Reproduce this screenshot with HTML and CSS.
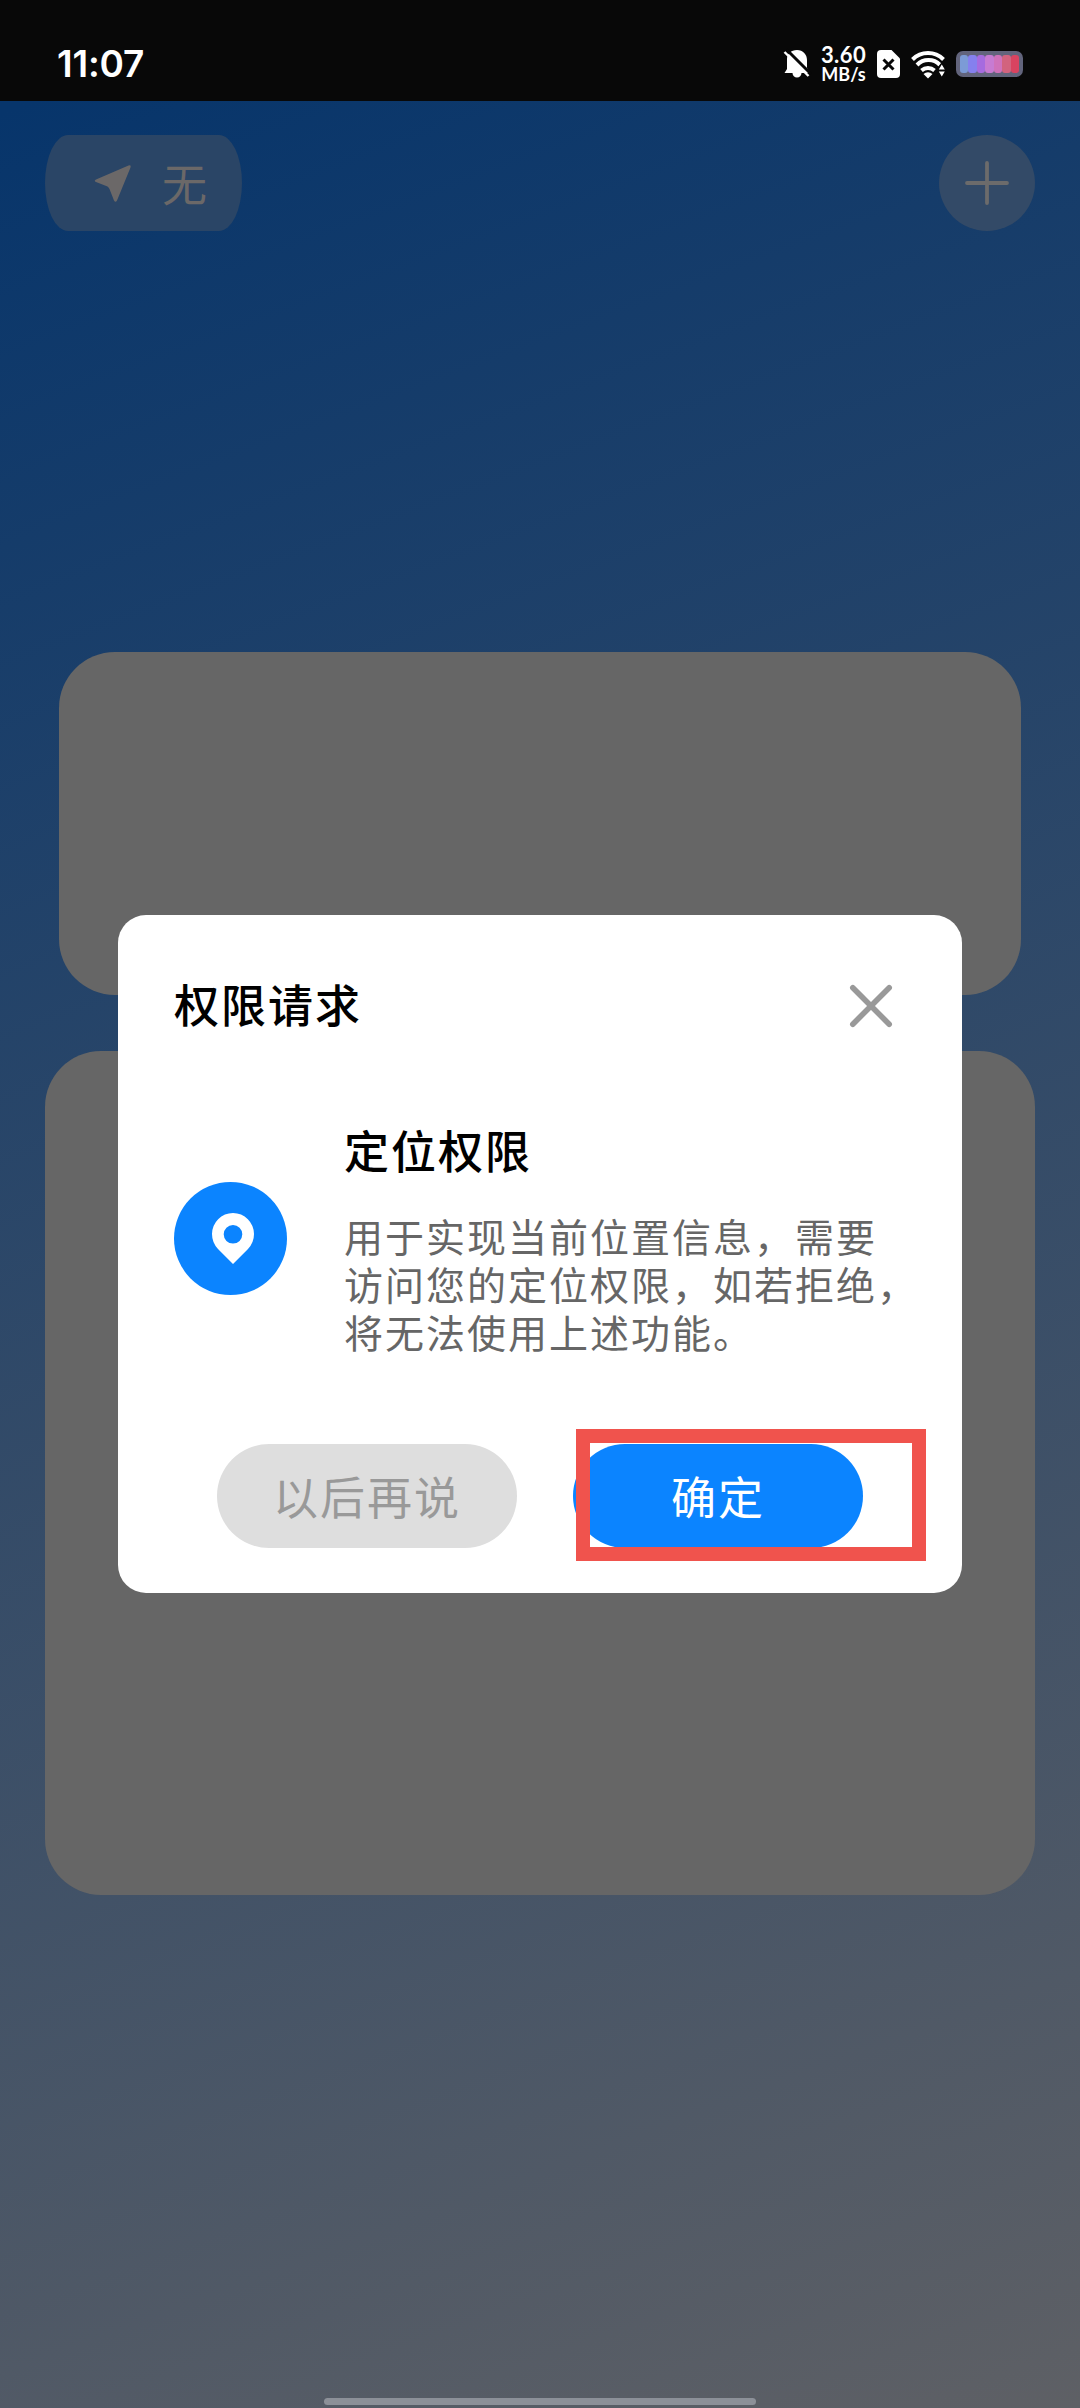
FILE: index.html
```html
<!DOCTYPE html>
<html lang="zh-CN">
<head>
<meta charset="utf-8">
<title>权限请求</title>
<link rel="stylesheet" href="styles.css">
</head>
<body>
<div class="screen">
  <header class="status">
    <span class="clock">11:07</span>
    <div class="indicators">
      <svg class="bell" width="26" height="28" viewBox="0 0 26 28"><path d="M13 0c6 0 10 4.500 10 10v8l3 5H17.500a4.500 4.500 0 0 1-9 0H0.500l2.500-4V9C3 4 7 0 13 0z" fill="#fff"/><path d="M2.500-.5L27 24" stroke="#080808" stroke-width="3"/><path d="M.5 2L24.500 26" stroke="#fff" stroke-width="2.400"/></svg>
      <div class="speed"><span class="rate">3.60</span><span class="unit">MB/s</span></div>
      <svg class="sim" width="23" height="28" viewBox="0 0 23 28"><path d="M4 0H14.500L23 8.500V24a4 4 0 0 1-4 4H4a4 4 0 0 1-4-4V4a4 4 0 0 1 4-4z" fill="#fff"/><path d="M6.500 9.500l10 10M16.500 9.500l-10 10" stroke="#080808" stroke-width="3"/></svg>
      <svg class="wifi" width="35" height="28" viewBox="0 0 35 28"><g fill="none" stroke="#fff" stroke-width="4"><path d="M1.500 9.500a22 22 0 0 1 31 0"/><path d="M6 15a16 16 0 0 1 23 0"/><path d="M10.500 20.500a10 10 0 0 1 13 0"/></g><path d="M12.500 24a7 7 0 0 1 9 0L17 28.500z" fill="#fff"/><path d="M30.800 12l5 5v11h-9.500v-10z" fill="#080808"/><path d="M27.800 19.500l3-5 3 5zM27.800 21.500h6l-3 5z" fill="#fff"/></svg>
      <div class="battery"><i></i><i></i><i></i><i></i><i></i><i></i><i></i></div>
    </div>
  </header>
  <main class="page">
    <div class="toolbar">
      <div class="place">
        <svg width="38" height="39" viewBox="0 0 38 39"><path d="M2 15.500L34.500 1.500Q37.500 .5 36.500 3.500L23 36.500Q21.500 39 20 36.500L15.500 25Q15 23.500 13.500 22.500L2 18Q-.5 16.800 2 15.500z" fill="#6b6868"/></svg>
        <span>无</span>
      </div>
      <div class="add"><svg width="44" height="44" viewBox="0 0 44 44"><path d="M22 2v40M2 22h40" stroke="#6c6b6b" stroke-width="3.800" stroke-linecap="round"/></svg></div>
    </div>
    <div class="card card-now"></div>
    <div class="card card-list"></div>
  </main>
  <section class="dialog">
    <div class="dialog-head">
      <h1>权限请求</h1>
      <svg width="42" height="42" viewBox="0 0 42 42"><path d="M2.800 2.800l36.400 36.400M39.200 2.800L2.800 39.200" stroke="#999" stroke-width="5.600" stroke-linecap="round"/></svg>
    </div>
    <div class="permission">
      <div class="pin"><svg width="42" height="51" viewBox="0 0 42 51"><path fill-rule="evenodd" d="M21 0a21 21 0 0 1 21 21q0 8.500-6 15L21 51 6 36Q0 29.500 0 21A21 21 0 0 1 21 0zm0 12a9.300 9.300 0 1 0 0 18.600A9.300 9.300 0 0 0 21 12z" fill="#fff"/></svg></div>
      <div class="info">
        <h2>定位权限</h2>
        <p>用于实现当前位置信息，需要<br>访问您的定位权限，如若拒绝，<br>将无法使用上述功能。</p>
      </div>
    </div>
    <div class="actions">
      <div class="button later">以后再说</div>
      <div class="button confirm">确定</div>
    </div>
    <div class="highlight"></div>
  </section>
  <div class="home-bar"></div>
</div>
</body>
</html>
```
FILE: styles.css
```css
* { box-sizing: border-box; }
body { margin: 0; font-family: "Noto Sans CJK SC", sans-serif; }
svg { display: block; overflow: visible; }
.screen {
  position: relative;
  width: 1080px;
  height: 2408px;
  overflow: hidden;
  background: linear-gradient(159.500deg, #07356b 4%, #5e6065 100%);
}
.status {
  height: 101px;
  padding: 26px 57px 0 57px;
  display: flex;
  justify-content: space-between;
  background: #080808;
  color: #fff;
}
.clock { font: 600 37px/76px Inter, sans-serif; letter-spacing: -0.2px; }
.indicators { display: flex; height: 28px; margin-top: 24px; align-items: center; }
.speed {
  display: flex;
  flex-direction: column;
  align-items: center;
  width: 45px;
  margin: 0 11px 0 11px;
  font-family: Lato, sans-serif;
  font-weight: 700;
}
.rate { font-size: 22px; line-height: 20px; letter-spacing: 0.4px; }
.unit { font-size: 18px; line-height: 18px; }
.wifi { margin: 0 10px 0 11px; }
.battery {
  width: 67px;
  height: 26px;
  padding: 4px;
  display: flex;
  border-radius: 7px;
  background: #62647c;
}
.battery i { flex: 1; border-radius: 3px; }
.battery i:nth-child(1) { background: #7c9bd6; }
.battery i:nth-child(2) { background: #8580ee; }
.battery i:nth-child(3) { background: #a66bdf; }
.battery i:nth-child(4) { background: #c77bd2; }
.battery i:nth-child(5) { background: #cf72ba; }
.battery i:nth-child(6) { background: #d2637e; }
.battery i:nth-child(7) { background: #d94360; }
.page { padding: 34px 45px 0; }
.toolbar { display: flex; justify-content: space-between; height: 96px; }
.place {
  width: 197px;
  height: 96px;
  padding-left: 49px;
  display: flex;
  align-items: center;
  gap: 30px;
  border-radius: 23px / 48px;
  background: #2a4566;
  color: #6b6868;
  font-size: 45px;
  line-height: 96px;
}
.add {
  width: 96px;
  height: 96px;
  display: grid;
  place-items: center;
  border-radius: 50%;
  background: #334a67;
}
.card { border-radius: 56px; background: #666; }
.card-now { height: 343px; margin: 421px 14px 0; }
.card-list { height: 844px; margin-top: 56px; }
.dialog {
  position: absolute;
  left: 118px;
  top: 915px;
  width: 844px;
  height: 678px;
  padding: 56px 56px 45px;
  border-radius: 28px;
  background: #fff;
}
.dialog-head { display: flex; justify-content: space-between; align-items: center; height: 70px; padding-right: 14px; }
h1, h2 { margin: 0; font-size: 45px; line-height: 68px; font-weight: 500; letter-spacing: 2px; color: #000; }
h1 { padding-bottom: 5px; }
.permission { display: flex; gap: 57px; align-items: center; height: 253px; margin-top: 71px; }
.pin { width: 113px; height: 113px; flex: none; display: grid; place-items: center; border-radius: 50%; background: #0b84ff; }
.pin svg { margin-left: 4px; }
.info { align-self: flex-start; margin-top: 4px; }
p { margin: 27px 0 0; font-size: 39px; line-height: 48px; letter-spacing: 2px; color: #666; white-space: nowrap; }
.actions { display: flex; gap: 56px; margin: 79px 0 0 43px; }
.button { width: 300px; height: 104px; border-radius: 52px; text-align: center; font-size: 45px; line-height: 104px; letter-spacing: 2px; }
.later { background: #dedede; color: #999; }
.confirm { width: 290px; background: #0b84ff; color: #fff; }
.highlight {
  position: absolute;
  left: 458px;
  top: 514px;
  width: 350px;
  height: 132px;
  border: 14px solid #f0534d;
}
.home-bar { position: absolute; left: 324px; top: 2398px; width: 432px; height: 7px; border-radius: 4px; background: #8c9098; }
```
